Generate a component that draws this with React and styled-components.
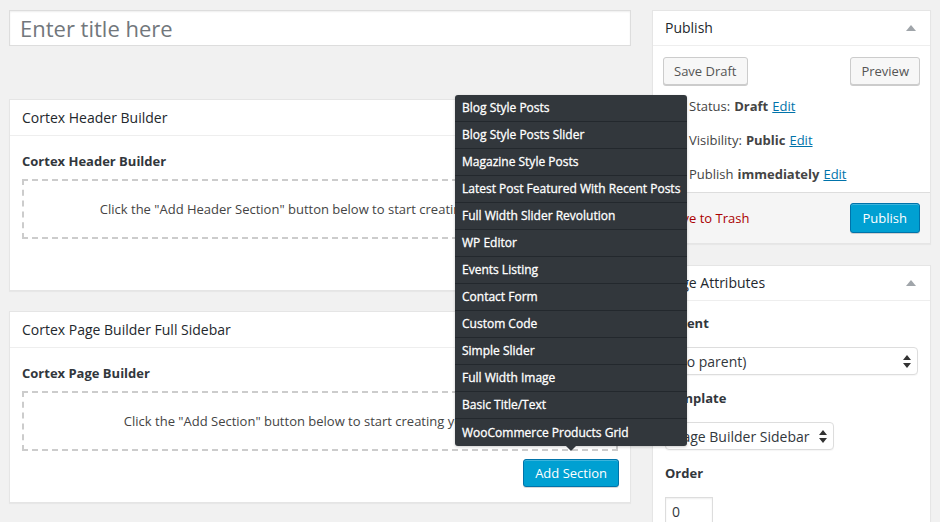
import React from "react";
import styled, { createGlobalStyle } from "styled-components";

const GlobalStyle = createGlobalStyle`
  html, body {
    margin: 0;
    background: #f1f1f1;
  }
  body {
    font-family: "Open Sans", sans-serif;
    font-size: 13px;
    color: #444;
  }
  * {
    box-sizing: border-box;
  }
`;

const Page = styled.div`
  position: relative;
  display: flex;
  gap: 21px;
  padding: 10px 9px 0;
  height: 522px;
  overflow: hidden;
`;

const Main = styled.div`
  width: 622px;
  display: flex;
  flex-direction: column;
`;

const Side = styled.div`
  width: 279px;
  display: flex;
  flex-direction: column;
  gap: 21px;
`;

const TitleInput = styled.input`
  height: 36px;
  margin: 0 0 53px;
  padding: 0 10px;
  border: 1px solid #ddd;
  background: #fff;
  box-shadow: inset 0 1px 2px rgba(0, 0, 0, 0.07);
  font-family: "Open Sans", sans-serif;
  font-size: 22px;
  color: #32373c;
  outline: none;
  &::placeholder {
    color: #72777c;
  }
`;

const Postbox = styled.div`
  background: #fff;
  border: 1px solid #e5e5e5;
  box-shadow: 0 1px 1px rgba(0, 0, 0, 0.04);
  margin-bottom: ${({ $gap }) => $gap || 0}px;
`;

const BoxHeader = styled.h2`
  margin: 0;
  height: ${({ $h }) => $h || 36}px;
  padding: 0 12px 1px;
  display: flex;
  align-items: center;
  justify-content: space-between;
  border-bottom: 1px solid #eee;
  font-size: 14px;
  font-weight: 400;
  color: #23282d;
`;

const Toggle = () => (
  <svg width="10" height="6" viewBox="0 0 10 6" style={{ marginRight: 2 }}>
    <path d="M5 0 L10 6 L0 6 Z" fill="#a0a5aa" />
  </svg>
);

const BuilderInside = styled.div`
  padding: 15px 11px 15px 12px;
`;

const BuilderLabel = styled.div`
  font-weight: 700;
  line-height: 20px;
  color: #32373c;
`;

const Dropzone = styled.div`
  margin-top: 8px;
  margin-right: 1px;
  height: 60px;
  border: 2px dashed #ccc;
  display: flex;
  align-items: center;
  justify-content: center;
  font-size: 13px;
  color: #444;
`;

const BuilderFooter = styled.div`
  margin-top: 8px;
  display: flex;
  justify-content: flex-end;
  visibility: ${({ $hidden }) => ($hidden ? "hidden" : "visible")};
`;

const Button = styled.button`
  height: ${({ $h }) => $h || 28}px;
  padding: 0 ${({ $px }) => $px || 10}px;
  border-radius: 3px;
  font-family: "Open Sans", sans-serif;
  font-size: 13px;
  cursor: pointer;
  background: #f7f7f7;
  border: 1px solid #ccc;
  box-shadow: 0 1px 0 #ccc;
  color: #555;
`;

const PrimaryButton = styled(Button)`
  background: #00a0d2;
  border-color: #0073aa;
  box-shadow: inset 0 1px 0 rgba(120, 200, 230, 0.5), 0 1px 0 rgba(0, 0, 0, 0.15);
  color: #fff;
`;

const MinorActions = styled.div`
  padding: 11px 10px 0;
  display: flex;
  justify-content: space-between;
`;

const MiscActions = styled.div`
  padding: 4px 0 1px;
`;

const MiscRow = styled.div`
  height: 34px;
  display: flex;
  align-items: center;
  gap: 5px;
  padding-left: 13px;
  color: #444;
  b {
    font-weight: 700;
    margin: 0 4px;
  }
`;

const Link = styled.a`
  color: #0073aa;
  text-decoration: underline;
`;

const MajorActions = styled.div`
  border-top: 1px solid #ddd;
  background: #f5f5f5;
  padding: 10px;
  display: flex;
  align-items: center;
  justify-content: space-between;
`;

const TrashLink = styled.a`
  color: #a00;
  font-size: 13px;
`;

const AttrInside = styled.div`
  padding: 12px 12px 12px;
`;

const FieldLabel = styled.div`
  font-weight: 700;
  line-height: 20px;
  color: #32373c;
  margin-bottom: 14px;
`;

const SelectBox = styled.div`
  width: ${({ $w }) => ($w ? `${$w}px` : "100%")};
  height: 28px;
  margin-bottom: 13px;
  padding: 0 6px 0 8px;
  display: flex;
  align-items: center;
  justify-content: space-between;
  border: 1px solid #ddd;
  border-radius: 4px;
  background: #fff;
  box-shadow: 0 1px 1px rgba(0, 0, 0, 0.04);
  font-size: 14px;
  color: #32373c;
`;

const NumberInput = styled.div`
  width: 48px;
  height: 28px;
  padding: 0 6px;
  display: flex;
  align-items: center;
  border: 1px solid #ddd;
  background: #fff;
  box-shadow: inset 0 1px 2px rgba(0, 0, 0, 0.07);
  font-size: 14px;
  color: #32373c;
`;

const Updown = () => (
  <svg width="8" height="13" viewBox="0 0 8 13">
    <path d="M4 0 L8 5 L0 5 Z M4 13 L8 8 L0 8 Z" fill="#333" />
  </svg>
);

const Menu = styled.ul`
  position: absolute;
  left: 455px;
  top: 95px;
  width: 232px;
  margin: 0;
  padding: 0;
  list-style: none;
  background: #32373c;
  border-radius: 3px;
  box-shadow: 0 1px 3px rgba(0, 0, 0, 0.2);
  &::after {
    content: "";
    position: absolute;
    left: 111px;
    bottom: -5px;
    border-left: 5px solid transparent;
    border-right: 5px solid transparent;
    border-top: 5px solid #32373c;
  }
`;

const MenuItem = styled.li`
  height: 27px;
  padding: 0 7px 1px;
  display: flex;
  align-items: center;
  border-bottom: 1px solid #23282d;
  color: #fff;
  font-size: 12px;
  font-weight: 400;
  white-space: nowrap;
  -webkit-text-stroke: 0.3px #fff;
  &:last-child {
    border-bottom: 0;
  }
`;

const icon = { width: 18, height: 18, flex: "none" };

const menuItems = [
  "Blog Style Posts",
  "Blog Style Posts Slider",
  "Magazine Style Posts",
  "Latest Post Featured With Recent Posts",
  "Full Width Slider Revolution",
  "WP Editor",
  "Events Listing",
  "Contact Form",
  "Custom Code",
  "Simple Slider",
  "Full Width Image",
  "Basic Title/Text",
  "WooCommerce Products Grid",
];

const BuilderBox = ({ title, label, text, hideButton, gap }) => (
  <Postbox $gap={gap}>
    <BoxHeader>{title}</BoxHeader>
    <BuilderInside>
      <BuilderLabel>{label}</BuilderLabel>
      <Dropzone>{text}</Dropzone>
      <BuilderFooter $hidden={hideButton}>
        <PrimaryButton $px={11}>Add Section</PrimaryButton>
      </BuilderFooter>
    </BuilderInside>
  </Postbox>
);

export default function App() {
  return (
    <>
      <GlobalStyle />
      <Page>
        <Main>
          <TitleInput placeholder="Enter title here" />
          <BuilderBox
            gap={20}
            title="Cortex Header Builder"
            label="Cortex Header Builder"
            text={'Click the "Add Header Section" button below to start creating your layout'}
            hideButton
          />
          <BuilderBox
            title="Cortex Page Builder Full Sidebar"
            label="Cortex Page Builder"
            text={'Click the "Add Section" button below to start creating your layout'}
          />
        </Main>
        <Side>
          <Postbox>
            <BoxHeader $h={35}>
              Publish
              <Toggle />
            </BoxHeader>
            <MinorActions>
              <Button>Save Draft</Button>
              <Button>Preview</Button>
            </MinorActions>
            <MiscActions>
              <MiscRow>
                <svg style={icon} viewBox="0 0 20 20">
                  <path d="M10 2l6 6-3 1-3 5-2-2-4 4-1-1 4-4-2-2 5-3z" fill="#82878c" />
                </svg>
                <span>
                  Status:<b>Draft</b>
                  <Link>Edit</Link>
                </span>
              </MiscRow>
              <MiscRow>
                <svg style={icon} viewBox="0 0 20 20">
                  <path d="M10 5c4 0 7 5 7 5s-3 5-7 5-7-5-7-5 3-5 7-5zm0 2.5a2.5 2.5 0 100 5 2.5 2.5 0 000-5z" fill="#82878c" />
                </svg>
                <span>
                  Visibility:<b>Public</b>
                  <Link>Edit</Link>
                </span>
              </MiscRow>
              <MiscRow>
                <svg style={icon} viewBox="0 0 20 20">
                  <path d="M3 4h14v13H3zM5 8v7h10V8z" fill="#82878c" />
                </svg>
                <span>
                  Publish<b>immediately</b>
                  <Link>Edit</Link>
                </span>
              </MiscRow>
            </MiscActions>
            <MajorActions>
              <TrashLink>Move to Trash</TrashLink>
              <PrimaryButton $h={30} $px={12}>Publish</PrimaryButton>
            </MajorActions>
          </Postbox>
          <Postbox>
            <BoxHeader $h={35}>
              Page Attributes
              <Toggle />
            </BoxHeader>
            <AttrInside>
              <FieldLabel>Parent</FieldLabel>
              <SelectBox>
                <span>(no parent)</span>
                <Updown />
              </SelectBox>
              <FieldLabel>Template</FieldLabel>
              <SelectBox $w={169}>
                <span>Page Builder Sidebar</span>
                <Updown />
              </SelectBox>
              <FieldLabel>Order</FieldLabel>
              <NumberInput>0</NumberInput>
            </AttrInside>
          </Postbox>
        </Side>
        <Menu>
          {menuItems.map((item) => (
            <MenuItem key={item}>{item}</MenuItem>
          ))}
        </Menu>
      </Page>
    </>
  );
}
